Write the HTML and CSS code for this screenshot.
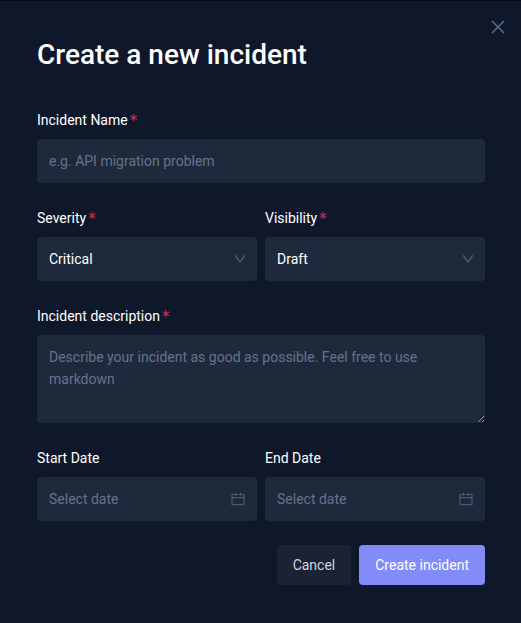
FILE: index.html
```html
<!DOCTYPE html>
<html lang="en">
<head>
<meta charset="utf-8">
<title>Create a new incident</title>
<link rel="stylesheet" href="styles.css">
</head>
<body>
<main class="modal">
  <button class="close" aria-label="Close"><svg width="16" height="16" viewBox="0 0 16 16"><path d="M2 2l12 12M14 2L2 14"/></svg></button>
  <h1>Create a new incident</h1>
  <form class="form">
    <div class="field">
      <label>Incident Name<span class="req">*</span></label>
      <input class="control" type="text" placeholder="e.g. API migration problem">
    </div>
    <div class="row">
      <div class="field">
        <label>Severity<span class="req">*</span></label>
        <div class="control select"><span>Critical</span><svg width="12" height="12" viewBox="0 0 12 12"><path d="M1.2 2.3L6 9l4.8-6.7"/></svg></div>
      </div>
      <div class="field">
        <label>Visibility<span class="req">*</span></label>
        <div class="control select"><span>Draft</span><svg width="12" height="12" viewBox="0 0 12 12"><path d="M1.2 2.3L6 9l4.8-6.7"/></svg></div>
      </div>
    </div>
    <div class="field">
      <label>Incident description<span class="req">*</span></label>
      <textarea class="control area" placeholder="Describe your incident as good as possible. Feel free to use markdown"></textarea>
    </div>
    <div class="row">
      <div class="field">
        <label>Start Date</label>
        <div class="control date"><span>Select date</span><svg width="14" height="14" viewBox="0 0 14 14"><path d="M1 2.5h12v10.2H1zM1 5.6h12M4.5.5v3.2M9.5.5v3.2"/></svg></div>
      </div>
      <div class="field">
        <label>End Date</label>
        <div class="control date"><span>Select date</span><svg width="14" height="14" viewBox="0 0 14 14"><path d="M1 2.5h12v10.2H1zM1 5.6h12M4.5.5v3.2M9.5.5v3.2"/></svg></div>
      </div>
    </div>
    <div class="actions">
      <button type="button" class="btn cancel">Cancel</button>
      <button type="button" class="btn primary">Create incident</button>
    </div>
  </form>
</main>
</body>
</html>
```

FILE: styles.css
```css
* { box-sizing: border-box; }
body { margin: 0; background: #0f172a; color: #fff; font: 14px/22px Roboto, sans-serif; }
.modal { position: relative; height: 623px; padding: 37px 36px 0 37px; border-top: 1px solid #070b14; }
.close { position: absolute; top: 18px; right: 15px; width: 16px; height: 16px; padding: 0; border: 0; background: none; }
svg { display: block; fill: none; stroke: #56647a; stroke-width: 1.2; }
.close svg { stroke: #64748b; stroke-width: 1.4; }
h1 { margin: 0 0 37px; font-size: 28px; line-height: 34px; font-weight: 500; }
.form { display: flex; flex-direction: column; gap: 24px; }
.row { display: grid; grid-template-columns: 1fr 1fr; gap: 8px; }
.field { display: flex; flex-direction: column; gap: 8px; }
label { display: block; height: 22px; }
.req { color: #cc3859; margin-left: 2px; font-family: "DejaVu Sans", sans-serif; font-size: 15px; line-height: 1; vertical-align: -1px; }
.control { width: 100%; height: 44px; padding: 11px 12px; border: 0; border-radius: 4px; background: #1e293b; color: #fff; font: inherit; outline: 0; }
.control::placeholder { color: #64748b; opacity: 1; }
.area { display: block; height: 88px; resize: vertical; }
.select, .date { display: flex; align-items: center; justify-content: space-between; }
.select { padding-right: 11px; }
.date { color: #64748b; }
.date svg { stroke: #4c5a6f; }
.actions { display: flex; justify-content: flex-end; gap: 8px; }
.btn { height: 40px; padding: 0 16px; border: 0; border-radius: 4px; font: inherit; color: #fff; }
.cancel { background: #1c2231; color: #cbd5e1; }
.primary { background: #818cf8; }
```
